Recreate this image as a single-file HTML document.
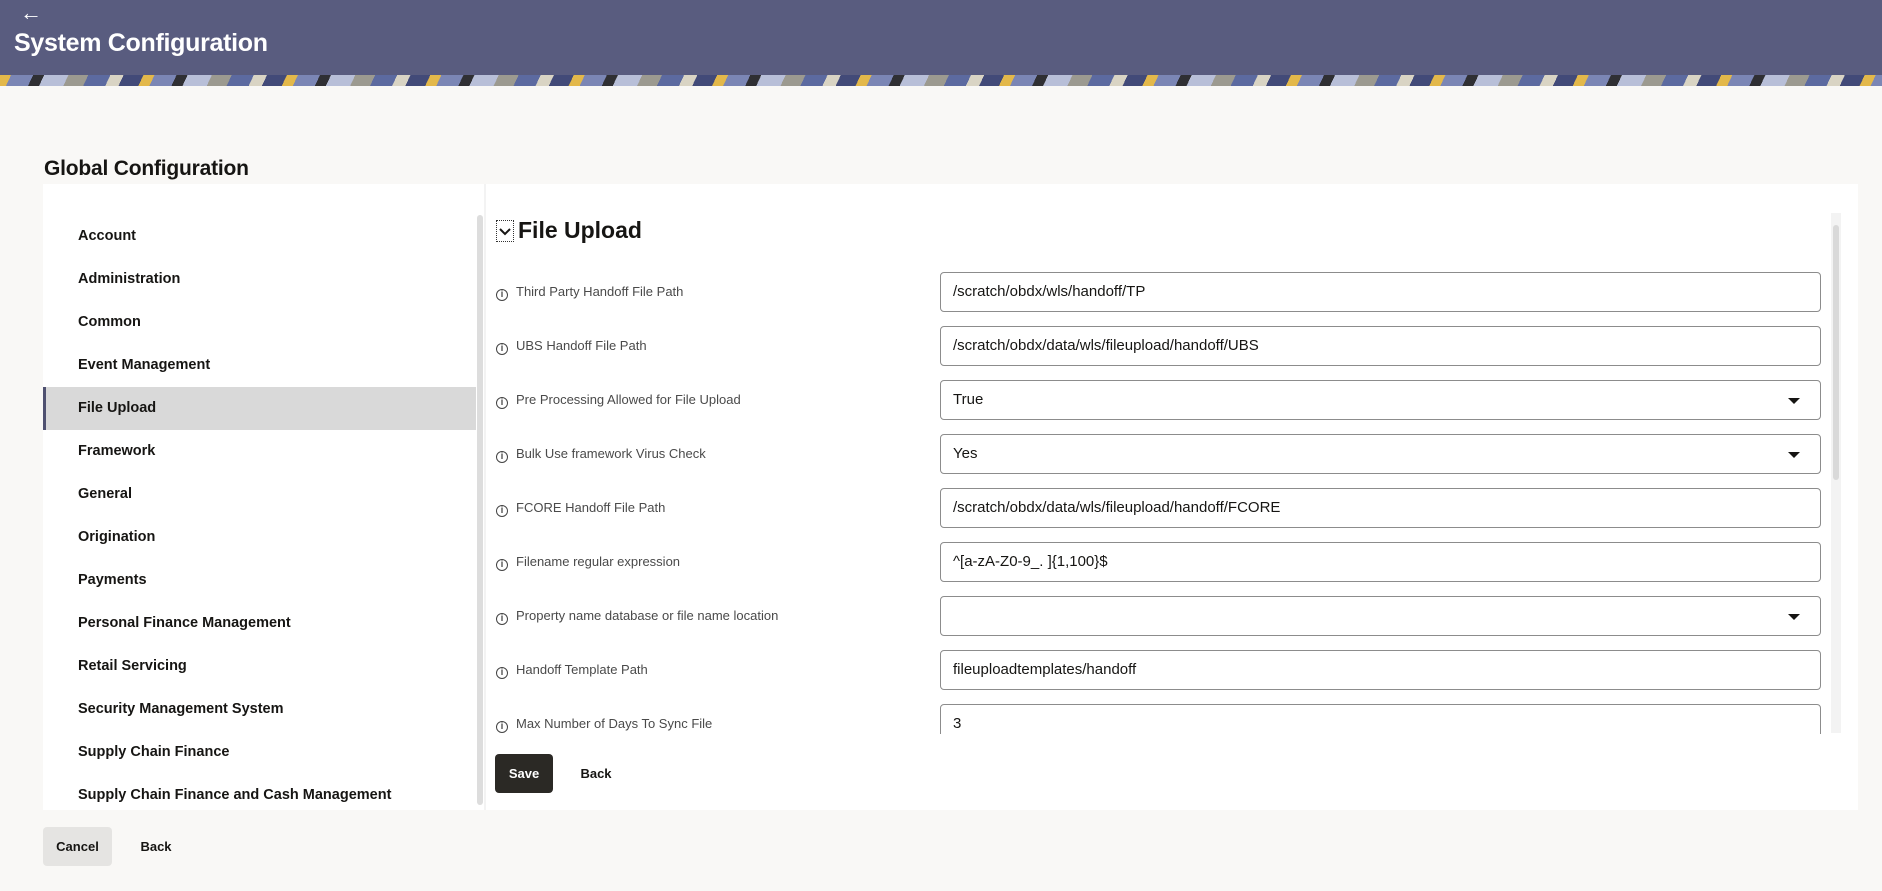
<!DOCTYPE html>
<html><head><meta charset="utf-8"><style>
*{box-sizing:border-box;margin:0;padding:0}
body{width:1882px;height:891px;overflow:hidden;background:#f9f8f6;font-family:"Liberation Sans",sans-serif;color:#161513;position:relative}
.hdr{position:absolute;left:0;top:0;width:1882px;height:75px;background:#595c7f}
.banner{position:absolute;left:0;top:75px;width:1882px;height:11px;background:repeating-linear-gradient(115deg,#e3b84a 0 10px,#7b86b5 10px 30px,#2f2f33 30px 40px,#b8bfd8 40px 62px,#9c9a90 62px 80px,#5c6aa0 80px 100px,#d9d4c4 100px 112px,#424a78 112px 130px)}
.back{position:absolute;left:20px;top:0px;color:#fff;font-size:22px}
.title{position:absolute;left:14px;top:29px;color:#fff;font-size:25px;font-weight:bold;letter-spacing:-0.3px}
.gc{position:absolute;left:44px;top:157px;font-size:21px;font-weight:bold;letter-spacing:-0.2px}
.panel{position:absolute;left:43px;top:184px;width:1815px;height:626px;background:#fff}
.nav{position:absolute;left:43px;top:184px;width:433px;height:626px;overflow:hidden}
.nav div{height:43px;line-height:43px;padding-left:35px;font-size:14.5px;font-weight:bold;color:#161513}
.nav .sel{background:#d9d9d9;border-left:3px solid #4f5170;padding-left:32px}
.nsb{position:absolute;left:477px;top:215px;width:6px;height:590px;background:#ddd;border-radius:3px}
.div{position:absolute;left:484px;top:184px;width:2px;height:626px;background:#f3f3f3}
.h2{position:absolute;left:518px;top:217px;font-size:23px;font-weight:bold}
.chev{position:absolute;left:496px;top:220px;width:18px;height:22px;border:1px dotted #333}
.row{position:absolute;left:496px;width:1325px;height:40px}
.lab{position:absolute;left:0;top:12px;font-size:13px;color:#4a4a4a}
.lab i{display:inline-block;width:12px;height:12px;border:1.5px solid #444;border-radius:50%;font-style:normal;font-size:9px;line-height:9px;text-align:center;margin-right:8px;vertical-align:-1px;color:#444;font-weight:bold}
.inp{position:absolute;left:444px;top:0;width:881px;height:40px;border:1px solid #8c8c8c;border-radius:4px;font-size:15px;line-height:38px;padding-left:12px;background:#fff}
.inp .ar{position:absolute;right:20px;top:17px;width:0;height:0;border-left:6px solid transparent;border-right:6px solid transparent;border-top:6px solid #161513}
.clip{position:absolute;left:486px;top:260px;width:1340px;height:474px;overflow:hidden}
.rsb{position:absolute;left:1831px;top:213px;width:10px;height:520px;background:#f3f3f3}
.rsb div{position:absolute;left:2px;top:12px;width:6px;height:255px;background:#d9d9d9;border-radius:3px}
.btn{position:absolute;font-size:13px;font-weight:bold;border-radius:4px;text-align:center}
</style></head><body>
<div class="hdr"></div><div class="banner"></div>
<div class="back">←</div>
<div class="title">System Configuration</div>
<div class="gc">Global Configuration</div>
<div class="panel"></div>
<div class="nav" style="padding-top:31px">
<div>Account</div><div>Administration</div><div>Common</div><div>Event Management</div><div class="sel">File Upload</div><div>Framework</div><div>General</div><div>Origination</div><div>Payments</div><div>Personal Finance Management</div><div>Retail Servicing</div><div>Security Management System</div><div>Supply Chain Finance</div><div>Supply Chain Finance and Cash Management</div>
</div>
<div class="nsb"></div><div class="div"></div>
<div class="chev"><svg width="16" height="20"><path d="M3 8 L8 13 L13 8" stroke="#161513" stroke-width="2" fill="none"/></svg></div>
<div class="h2">File Upload</div>
<div class="clip">
<div class="row" style="left:10px;top:12px"><div class="lab"><i>i</i>Third Party Handoff File Path</div><div class="inp">/scratch/obdx/wls/handoff/TP</div></div>
<div class="row" style="left:10px;top:66px"><div class="lab"><i>i</i>UBS Handoff File Path</div><div class="inp">/scratch/obdx/data/wls/fileupload/handoff/UBS</div></div>
<div class="row" style="left:10px;top:120px"><div class="lab"><i>i</i>Pre Processing Allowed for File Upload</div><div class="inp">True<span class="ar"></span></div></div>
<div class="row" style="left:10px;top:174px"><div class="lab"><i>i</i>Bulk Use framework Virus Check</div><div class="inp">Yes<span class="ar"></span></div></div>
<div class="row" style="left:10px;top:228px"><div class="lab"><i>i</i>FCORE Handoff File Path</div><div class="inp">/scratch/obdx/data/wls/fileupload/handoff/FCORE</div></div>
<div class="row" style="left:10px;top:282px"><div class="lab"><i>i</i>Filename regular expression</div><div class="inp">^[a-zA-Z0-9_. ]{1,100}$</div></div>
<div class="row" style="left:10px;top:336px"><div class="lab"><i>i</i>Property name database or file name location</div><div class="inp"><span class="ar"></span></div></div>
<div class="row" style="left:10px;top:390px"><div class="lab"><i>i</i>Handoff Template Path</div><div class="inp">fileuploadtemplates/handoff</div></div>
<div class="row" style="left:10px;top:444px"><div class="lab"><i>i</i>Max Number of Days To Sync File</div><div class="inp">3</div></div>
</div>
<div class="rsb"><div></div></div>
<div class="btn" style="left:495px;top:754px;width:58px;height:39px;line-height:39px;background:#2b2925;color:#fff">Save</div>
<div class="btn" style="left:572px;top:754px;width:48px;height:39px;line-height:39px">Back</div>
<div class="btn" style="left:43px;top:827px;width:69px;height:39px;line-height:39px;background:#e5e4e2">Cancel</div>
<div class="btn" style="left:133px;top:827px;width:46px;height:39px;line-height:39px">Back</div>
</body></html>
